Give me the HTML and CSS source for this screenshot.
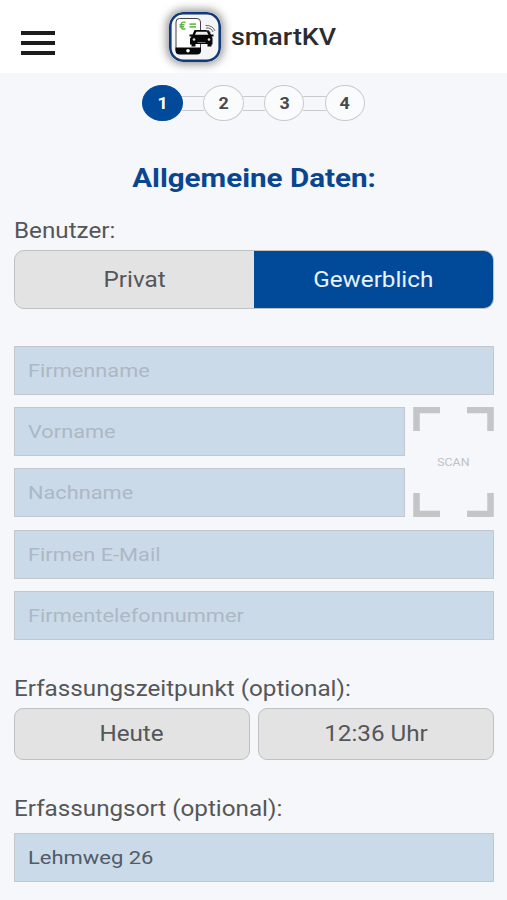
FILE: index.html
```html
<!DOCTYPE html>
<html lang="de">
<head>
<meta charset="utf-8">
<title>smartKV</title>
<link rel="stylesheet" href="styles.css">
</head>
<body>
<header class="header">
  <button class="menu" aria-label="Menü"><i></i><i></i><i></i></button>
  <svg class="logo" viewBox="0 0 52 50" aria-hidden="true">
    <rect x="1.3" y="1.3" width="49.400" height="47.400" rx="13" fill="#f3f5f8" stroke="#123a78" stroke-width="2.600"/>
    <rect x="7" y="6.500" width="24.500" height="35" rx="3.500" fill="#fff" stroke="#444" stroke-width="1"/>
    <path d="M6.500 35.500h25.500v3a4 4 0 0 1-4 4h-17.500a4 4 0 0 1-4-4z" fill="#080808"/>
    <circle cx="19" cy="38.700" r="1.800" fill="#fff"/>
    <path d="M16.500 10.500q-4.500-1.500-4.500 3t4.500 3.200M10.500 12.700h5M10.500 14.700h4.500" fill="none" stroke="#5fb543" stroke-width="1.500"/>
    <path d="M20.500 12.200h6.500M20.500 14.800h6.500" stroke="#73bd5c" stroke-width="1.700"/>
    <path d="M20.500 22.500h3l2-4.500h14l2.500 4.500h2.500v2h-2l1 1.500v6.500h-1v2h-4v-2.500h-12v2.500h-4v-2h-1.500v-6l1.500-2h-2z" fill="#080808"/>
    <path d="M26 22.800l1.300-3h10.500l1.700 3z" fill="#eee"/>
    <circle cx="25" cy="27.500" r="1.300" fill="#ddd"/><circle cx="40" cy="27.500" r="1.300" fill="#ddd"/>
    <path d="M28.500 30.500h8" stroke="#777" stroke-width="1"/>
    <path d="M37.500 18.500q3-.5 4 2M37 16q5.500-.5 7 4M36.500 13.500q7-.5 9.500 5.500" fill="none" stroke="#666" stroke-width="1"/>
  </svg>
  <span class="brand">smartKV</span>
</header>
<main class="content">
  <nav class="steps">
    <span class="step active"><b>1</b></span><i class="link"></i>
    <span class="step"><b>2</b></span><i class="link"></i>
    <span class="step"><b>3</b></span><i class="link"></i>
    <span class="step"><b>4</b></span>
  </nav>
  <h1 class="title"><span class="wide">Allgemeine Daten:</span></h1>
  <div class="label"><span class="wide">Benutzer:</span></div>
  <div class="segment">
    <button class="option"><span class="wide">Privat</span></button>
    <button class="option selected"><span class="wide">Gewerblich</span></button>
  </div>
  <div class="fields">
    <div class="field"><span class="wide">Firmenname</span></div>
    <div class="names">
      <div class="field"><span class="wide">Vorname</span></div>
      <div class="scan">
        <svg class="corners" viewBox="0 0 81 110" aria-hidden="true"><path d="M3.500 24V3H27M54 3h23.500v21M3.500 86v21H27M54 107h23.500V86" fill="none" stroke="#c4c5c6" stroke-width="6.500"/></svg>
        <span class="scan-text">SCAN</span>
      </div>
      <div class="field"><span class="wide">Nachname</span></div>
    </div>
    <div class="field"><span class="wide">Firmen E-Mail</span></div>
    <div class="field"><span class="wide">Firmentelefonnummer</span></div>
  </div>
  <div class="label time-label"><span class="wide">Erfassungszeitpunkt (optional):</span></div>
  <div class="times">
    <button class="time"><span class="wide">Heute</span></button>
    <button class="time"><span class="wide">12:36 Uhr</span></button>
  </div>
  <div class="label place-label"><span class="wide">Erfassungsort (optional):</span></div>
  <div class="field filled"><span class="wide">Lehmweg 26</span></div>
</main>
</body>
</html>
```
FILE: styles.css
```css
* { box-sizing: border-box; }
body { margin: 0; height: 900px; overflow: hidden; background: #f5f7fb; color: #555658; font-family: Roboto, "Liberation Sans", sans-serif; }
button { font: inherit; color: inherit; border: 0; padding: 0; margin: 0; background: none; }
.wide { display: inline-block; white-space: nowrap; transform: scaleX(1.127); transform-origin: left center; }

.header { height: 73px; display: flex; align-items: flex-start; background: #fff; }
.menu { width: 34px; height: 24px; margin: 31px 0 0 21px; display: flex; flex-direction: column; justify-content: space-between; }
.menu i { height: 4px; background: #1c1c1c; }
.logo { width: 52px; height: 50px; margin: 12px 0 0 114px; border-radius: 14px; box-shadow: 0 0 10px 2px rgba(0, 0, 0, .45); }
.brand { margin: 22px 0 0 10px; font-size: 24px; line-height: 30px; font-weight: 500; color: #2c2c2e; transform: scaleX(1.12); transform-origin: left center; }

.content { padding: 12px 13.500px 0 14px; }
.steps { display: flex; justify-content: center; align-items: center; height: 36px; }
.step { width: 40.500px; height: 36px; border: 1px solid #c9cacd; border-radius: 50%; background: #fafbfd; display: flex; align-items: center; justify-content: center; font-size: 16px; color: #48494b; }
.step b { transform: scaleX(1.12); }
.step.active { background: #004a99; border-color: #004a99; color: #fff; }
.link { width: 22.300px; height: 15px; margin: 0 -1px; border: solid #c9cacd; border-width: 1px 0; }

.title { margin: 41px 0 0; height: 32px; line-height: 32px; font-size: 25.500px; font-weight: 700; text-align: center; color: #0a468f; }
.title .wide, .option .wide, .time .wide { transform-origin: center; }
.title .wide { transform: scaleX(1.16); }
.label { height: 28px; line-height: 28px; margin-top: 23px; font-size: 21.500px; }
.segment { display: flex; height: 59px; margin-top: 5px; border: 1px solid #bfc0c2; border-radius: 10px; overflow: hidden; background: #e3e3e3; }
.option { flex: 1; font-size: 21.500px; }
.option.selected { background: #004a99; color: #e8f3ff; }

.fields { margin-top: 37px; display: grid; gap: 12.200px; }
.names { display: grid; grid-template-columns: 1fr 81px; gap: 12.200px 8px; }
.field { height: 49px; padding-left: 13px; border: 1px solid #c3c8cf; background: #cbdae9; display: flex; align-items: center; font-size: 19px; color: #acb8c4; }
.field .wide { transform: scaleX(1.145); }
.field.filled { margin-top: 10.500px; color: #505b67; }
.field.filled .wide { transform: scaleX(1.155); }
.scan { grid-column: 2; grid-row: 1 / span 2; display: grid; place-items: center; }
.corners, .scan-text { grid-area: 1 / 1; }
.corners { width: 81px; height: 110px; }
.scan-text { font-size: 11px; color: #bfc1c4; transform: scaleX(1.12); }

.time-label { margin-top: 35px; }
.times { display: grid; grid-template-columns: 1fr 1fr; gap: 8px; margin-top: 5px; }
.time { height: 52px; border: 1px solid #bfc0c2; border-radius: 9px; background: #e3e3e3; font-size: 21.500px; }
.place-label { margin-top: 35px; }
```
